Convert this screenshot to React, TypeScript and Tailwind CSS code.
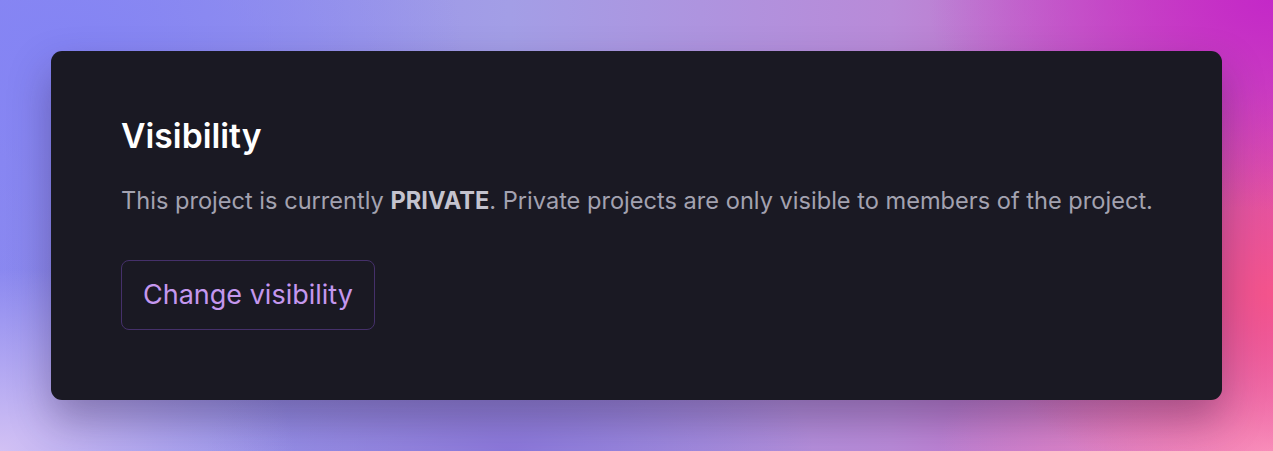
import React from "react";

export default function App() {
  return (
    <div
      className="w-[1273px] h-[451px] overflow-hidden flex items-start justify-center pt-[51px]"
      style={{
        fontFamily: "Inter, 'Noto Sans', sans-serif",
        background:
          "radial-gradient(ellipse 420px 260px at 0% 100%, rgba(214,196,244,0.95), rgba(214,196,244,0) 70%), radial-gradient(ellipse 460px 280px at 100% 0%, rgba(196,40,200,1), rgba(196,40,200,0) 75%), radial-gradient(ellipse 420px 300px at 100% 65%, rgba(244,84,140,1), rgba(244,84,140,0) 70%), radial-gradient(ellipse 420px 200px at 100% 100%, rgba(250,160,200,1), rgba(250,160,200,0) 80%), radial-gradient(ellipse 380px 160px at 40% 100%, rgba(140,120,220,1), rgba(140,120,220,0) 80%), radial-gradient(ellipse 500px 300px at 5% 10%, rgba(132,132,244,1), rgba(132,132,244,0) 80%), linear-gradient(90deg, #8a88f0 0%, #a39ee6 40%, #b98ad8 70%, #d050b8 100%)",
      }}
    >
      <div className="w-[1171px] h-[349px] rounded-[11px] bg-[#1a1923] shadow-[0_20px_40px_rgba(40,20,60,0.35)] pl-[70px] pt-[65px]">
        <h2 className="text-[33.7px] leading-[40px] font-semibold text-white">Visibility</h2>
        <p className="mt-[29px] text-[23.6px] leading-[32px] text-[#a3a2b0] whitespace-nowrap">
          This project is currently <strong className="font-bold text-[#c4c3ce]">PRIVATE</strong>. Private projects are only visible to members of the project.
        </p>
        <button className="mt-[43px] h-[70px] px-[21px] rounded-[8px] border border-[#45306a] text-[27px] text-[#c497ee] bg-transparent">
          Change visibility
        </button>
      </div>
    </div>
  );
}
